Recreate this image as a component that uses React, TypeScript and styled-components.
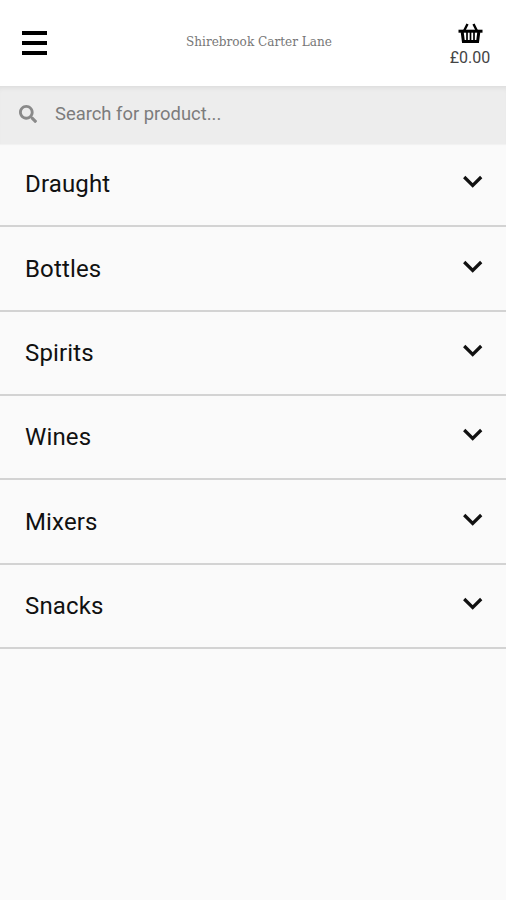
import React from "react";
import styled, { createGlobalStyle } from "styled-components";
import { FaSearch } from "react-icons/fa";

const GlobalStyle = createGlobalStyle`
  * { box-sizing: border-box; }
  body { margin: 0; background: #fafafa; font-family: Roboto, sans-serif; color: #111; }
`;

const Page = styled.main`
  min-height: 900px;
  background: #fafafa;
`;

const Header = styled.header`
  display: flex;
  justify-content: space-between;
  align-items: center;
  height: 86px;
  padding: 0 16px 0 22px;
  background: #fff;
`;

const MenuButton = styled.button`
  display: flex;
  flex-direction: column;
  gap: 6px;
  width: 40px;
  padding: 0 15px 0 0;
  border: 0;
  background: none;
`;

const MenuBar = styled.span`
  height: 4px;
  background: #000;
`;

const Title = styled.svg`
  width: 156px;
  height: 24px;
  margin: 0 0 2px 6px;
  overflow: visible;
  font-family: "DejaVu Serif", serif;
  font-size: 12.5px;
  fill: #777;
`;

const Basket = styled.button`
  display: flex;
  flex-direction: column;
  align-items: center;
  gap: 4px;
  width: 40px;
  padding: 4px 0 0;
  border: 0;
  background: none;
  font: 16px/19px Roboto, sans-serif;
  color: #444;
`;

const SearchBar = styled.label`
  display: flex;
  align-items: center;
  gap: 18px;
  height: 58px;
  padding: 0 19px 3px;
  background: #ededed;
  box-shadow: inset 0 5px 5px -3px rgba(0, 0, 0, 0.07), 0 1px 1px #f2f2f2;
  color: #8a8a8a;
`;

const SearchInput = styled.input`
  flex: 1;
  min-width: 0;
  height: 22px;
  padding: 0;
  border: 0;
  outline: 0;
  background: none;
  font: 18.4px Roboto, sans-serif;
  &::placeholder { color: #7c7c7c; opacity: 1; }
`;

const CategoryList = styled.section`
  margin-top: -1px;
`;

const Category = styled.button`
  display: flex;
  justify-content: space-between;
  align-items: center;
  width: 100%;
  height: 84.36px;
  padding: 0 23px 0 25px;
  border: 0;
  border-bottom: 2px solid #d3d3d3;
  background: transparent;
  font: 24px Roboto, sans-serif;
  letter-spacing: 0.15px;
  color: #111;
`;

const Chevron = styled.svg`
  width: 20px;
  height: 13px;
  margin-bottom: 5px;
`;

const categories = ["Draught", "Bottles", "Spirits", "Wines", "Mixers", "Snacks"];

export default function App() {
  return (
    <Page>
      <GlobalStyle />
      <Header>
        <MenuButton aria-label="Menu"><MenuBar /><MenuBar /><MenuBar /></MenuButton>
        <Title viewBox="0 0 156 24"><text x="5" y="16" textLength="146" lengthAdjust="spacingAndGlyphs">Shirebrook Carter Lane</text></Title>
        <Basket>
          <svg width="25" height="21" viewBox="0 0 25 21" fill="none" stroke="#000">
            <path d="M9.5 1 6 8M15.5 1 19 8" strokeWidth="2.4" />
            <path d="M.5 8.2h24" strokeWidth="3" />
            <path d="M4.2 9l1.2 9.6h14.2L20.8 9" strokeWidth="3" />
            <path d="M9 9v10M12.5 9v10M16 9v10" strokeWidth="1.7" />
          </svg>
          £0.00
        </Basket>
      </Header>
      <SearchBar><FaSearch size={18} /><SearchInput placeholder="Search for product..." /></SearchBar>
      <CategoryList>
        {categories.map((name) => (
          <Category key={name}>
            {name}
            <Chevron viewBox="0 0 20 13" fill="none" stroke="#111" strokeWidth="3.2"><path d="m1.2 2 8.5 8.5 8.5-8.5" /></Chevron>
          </Category>
        ))}
      </CategoryList>
    </Page>
  );
}
